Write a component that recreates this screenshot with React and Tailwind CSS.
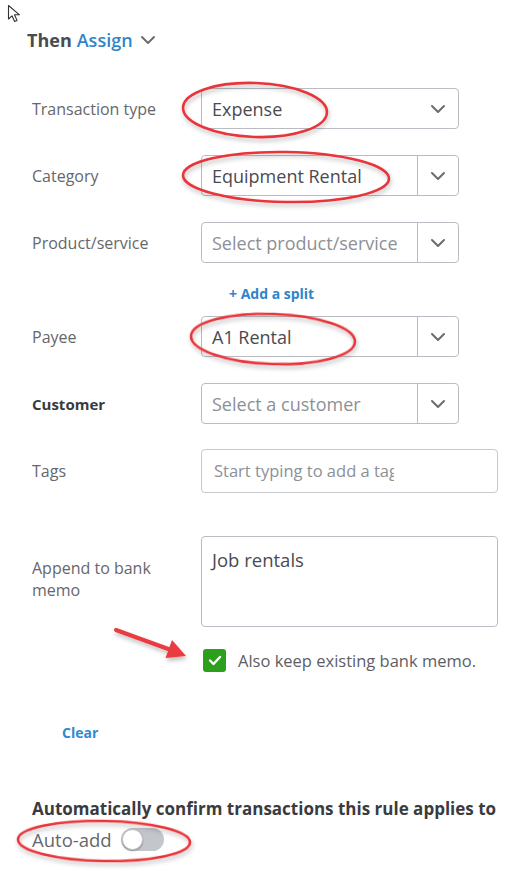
import React from "react";

const Chevron = ({ className = "" }) => (
  <svg width="16" height="10" viewBox="0 0 16 10" className={className}>
    <path d="M2 2 L8 8 L14 2" fill="none" stroke="#6b6c72" strokeWidth="2" strokeLinecap="round" strokeLinejoin="round" />
  </svg>
);

function Select({ value, placeholder, divider = true }) {
  return (
    <div className="flex h-[41px] w-[258px] items-stretch rounded-[4px] border border-[#b9bdc3] bg-white">
      <div className={`flex flex-1 items-center overflow-hidden whitespace-nowrap pl-[10px] text-[18px] leading-[22px] ${value ? "text-[#4a4b4f]" : "text-[#8d9096]"}`}>
        {value || placeholder}
      </div>
      <div className={`flex w-[41px] shrink-0 items-center justify-center ${divider ? "border-l border-[#b9bdc3]" : ""}`}>
        <Chevron />
      </div>
    </div>
  );
}

function Row({ label, bold, children, className = "" }) {
  return (
    <div className={`flex items-center ${className}`}>
      <div className={`w-[201px] shrink-0 pl-[32px] leading-[20px] ${bold ? "text-[15px] font-bold text-[#393a3d]" : "text-[16px] text-[#66676c]"}`}>{label}</div>
      {children}
    </div>
  );
}

export default function App() {
  return (
    <div className="relative h-[871px] w-[509px] overflow-hidden bg-white" style={{ fontFamily: "'Open Sans', Lato, sans-serif" }}>
      {/* cursor */}
      <svg className="absolute left-[7px] top-[4px]" width="16" height="20" viewBox="0 0 16 20">
        <path d="M1.5 1.5 L1.5 15 L5 11.8 L7.6 17.5 L10 16.4 L7.5 10.8 L12.5 10.8 Z" fill="white" stroke="#333" strokeWidth="1.1" strokeLinejoin="round" />
      </svg>

      <div className="flex flex-col">
        <div className="mt-[29px] flex items-center pl-[27px] text-[18px] font-bold leading-[22px]">
          <span className="text-[#4a4b4f]">Then</span>
          <span className="ml-[5px] font-semibold text-[#2f85c8]">Assign</span>
          <Chevron className="ml-[7px]" />
        </div>

        <Row label="Transaction type" className="mt-[37px]">
          <Select value="Expense" divider={false} />
        </Row>
        <Row label="Category" className="mt-[26px]">
          <Select value="Equipment Rental" />
        </Row>
        <Row label="Product/service" className="mt-[26px]">
          <Select placeholder="Select product/service" />
        </Row>
        <div className="mt-[22px] pl-[229px] text-[14px] font-bold leading-[18px] text-[#2f85c8]">+ Add a split</div>
        <Row label="Payee" className="mt-[13px]">
          <Select value="A1 Rental" />
        </Row>
        <Row label="Customer" bold className="mt-[26px]">
          <Select placeholder="Select a customer" />
        </Row>
        <Row label="Tags" className="mt-[25px]">
          <div className="flex h-[44px] w-[297px] items-center rounded-[4px] border border-[#c6c9ce] pl-[12px]">
            <div className="w-[180px] overflow-hidden whitespace-nowrap text-[16.5px] leading-[22px] text-[#8d9096]">Start typing to add a tag</div>
          </div>
        </Row>
        <div className="mt-[43px] flex">
          <div className="w-[201px] shrink-0 pl-[32px] pr-[40px] pt-[21px] text-[16px] leading-[22px] text-[#66676c]">Append to bank memo</div>
          <div className="h-[91px] w-[297px] rounded-[4px] border border-[#b9bdc3] px-[10px] pt-[12px] text-[18.5px] leading-[22px] text-[#4a4b4f]">Job rentals</div>
        </div>
        <div className="mt-[22px] flex items-center pl-[203px]">
          <div className="flex h-[23px] w-[23px] items-center justify-center rounded-[3px] bg-[#2ca01c]">
            <svg width="14" height="11" viewBox="0 0 14 11">
              <path d="M2 5.5 L5.5 9 L12 2" fill="none" stroke="white" strokeWidth="2.4" strokeLinecap="round" strokeLinejoin="round" />
            </svg>
          </div>
          <span className="ml-[12px] text-[16.5px] leading-[20px] text-[#5d5e63]">Also keep existing bank memo.</span>
        </div>
        <div className="mt-[52px] pl-[62px] text-[14px] font-bold leading-[18px] text-[#2f8ad3]">Clear</div>
        <div className="mt-[56px] pl-[32px] text-[17px] font-bold leading-[22px] text-[#3a3b3f]">Automatically confirm transactions this rule applies to</div>
        <div className="mt-[8px] flex items-center pl-[32px]">
          <span className="text-[18.5px] leading-[22px] text-[#66676c]">Auto-add</span>
          <div className="ml-[9px] flex h-[23px] w-[43px] items-center rounded-full bg-[#c3c6cb] p-[1px]">
            <div className="h-[21px] w-[21px] rounded-full border border-[#c3c6cb] bg-white shadow-[0_1px_2px_rgba(0,0,0,0.3)]" />
          </div>
        </div>
      </div>

      {/* annotations */}
      <svg className="pointer-events-none absolute left-0 top-0" width="509" height="871" viewBox="0 0 509 871">
        <defs>
          <filter id="sh" x="-20%" y="-20%" width="140%" height="160%">
            <feDropShadow dx="1" dy="3" stdDeviation="2" floodColor="#000" floodOpacity="0.25" />
          </filter>
        </defs>
        <g fill="none" stroke="#e8353b" strokeWidth="2.6" filter="url(#sh)">
          <ellipse cx="255" cy="110" rx="72" ry="27" transform="rotate(2 255 110)" />
          <ellipse cx="286" cy="177" rx="103" ry="25" transform="rotate(1 286 177)" />
          <ellipse cx="273" cy="339" rx="82" ry="25" transform="rotate(2 273 339)" />
          <ellipse cx="104" cy="841" rx="86" ry="20" transform="rotate(1 104 841)" />
        </g>
        <g filter="url(#sh)">
          <line x1="116" y1="630" x2="171" y2="650" stroke="#ea3a3f" strokeWidth="4" strokeLinecap="round" />
          <polygon points="186,656 165.5,658 172,640" fill="#ea3a3f" />
        </g>
      </svg>
    </div>
  );
}
